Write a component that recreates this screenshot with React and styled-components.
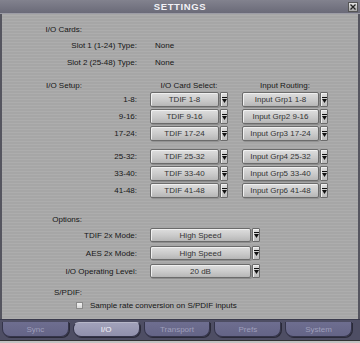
import styled, { createGlobalStyle } from "styled-components"

const GlobalStyle = createGlobalStyle`
    html, body {
        margin: 0;
        padding: 0;
        background: #bdbdbd;
    }
    body {
        font-family: "Liberation Sans", Arial, sans-serif;
        font-size: 8px;
        color: #161616;
    }
`

const Window = styled.div`
    width: 360px;
    height: 343px;
    display: flex;
    flex-direction: column;
    background: #bdbdbd;
    overflow: hidden;
`

const TitleBar = styled.div`
    height: 13px;
    display: grid;
    grid-template-columns: 1fr auto 1fr;
    align-items: center;
    background: linear-gradient(#82828e, #6a6a78);
    border-bottom: 1px solid #9c9ca6;
    padding: 0 2px 0 2px;
`

const Title = styled.div`
    grid-column: 2;
    color: #f2f2f6;
    font-weight: bold;
    font-size: 9.5px;
    letter-spacing: 0.6px;
`

const CloseButton = styled.div`
    grid-column: 3;
    justify-self: end;
    width: 8px;
    height: 8px;
    background: linear-gradient(#e4e4e4, #a8a8a8);
    border: 1px solid #555;
    display: flex;
    align-items: center;
    justify-content: center;
`

const Body = styled.div`
    flex: 1;
    padding-top: 11px;
    border-left: 2px solid #55555f;
    border-right: 2px solid #55555f;
    background-color: #a9a9a9;
    background-image: repeating-linear-gradient(
        0deg,
        rgba(255, 255, 255, 0.05) 0px,
        rgba(255, 255, 255, 0.05) 1px,
        rgba(0, 0, 0, 0.02) 1px,
        rgba(0, 0, 0, 0.02) 3px
    );
    display: flex;
    flex-direction: column;
`

const Header = styled.div`
    width: 80px;
    text-align: right;
    height: 10px;
    line-height: 10px;
    margin-top: ${p => p.$top || 0}px;
`

const HeaderRow = styled.div`
    display: grid;
    grid-template-columns: 80px 68px 78px 14px 86px;
    height: 10px;
    line-height: 10px;
    margin-top: ${p => p.$top || 0}px;
`

const ColHeader = styled.div`
    text-align: center;
    grid-column: ${p => p.$col};
`

const Row = styled.div`
    display: grid;
    grid-template-columns: 135px auto;
    column-gap: 13px;
    align-items: center;
    height: ${p => p.$h || 15}px;
    margin-top: ${p => p.$top || 0}px;
`

const Label = styled.div`
    text-align: right;
`

const Value = styled.div`
    padding-left: 5px;
`

const Controls = styled.div`
    display: flex;
    gap: 14px;
    height: 100%;
`

const Select = styled.div`
    display: flex;
    gap: 1px;
    width: ${p => p.$w}px;
    height: 100%;
`

const SelectBox = styled.div`
    flex: 1;
    box-sizing: border-box;
    border: 1px solid #6b6b6b;
    border-radius: 2px;
    background: linear-gradient(#dedede, #c8c8c8 60%, #b6b6b6);
    box-shadow: inset 1px 1px 0 #f0f0f0, 1px 1px 0 rgba(0, 0, 0, 0.15);
    color: #333;
    display: flex;
    align-items: center;
    justify-content: center;
    white-space: nowrap;
`

const ArrowBox = styled.div`
    width: 8px;
    box-sizing: border-box;
    border: 1px solid #6b6b6b;
    border-radius: 1px;
    background: linear-gradient(#dedede, #bcbcbc);
    box-shadow: inset 1px 1px 0 #f0f0f0;
    display: flex;
    align-items: center;
    justify-content: center;
`

const CheckRow = styled.div`
    display: flex;
    align-items: center;
    height: 10px;
    margin-top: 2px;
    padding-left: 74px;
    gap: 7px;
`

const CheckBox = styled.div`
    width: 7px;
    height: 7px;
    box-sizing: border-box;
    border: 1px solid #8a8a8a;
    background: linear-gradient(#f4f4f4, #d6d6d6);
`

const TabBar = styled.div`
    height: 20px;
    display: flex;
    gap: 4px;
    padding: 0 8px 0 2px;
    background: #4e4e64;
    border-top: 1px solid #3a3a4c;
`

const Tab = styled.div`
    flex: 1;
    height: 15px;
    margin-top: 2px;
    box-sizing: border-box;
    border-radius: ${p => (p.$active ? "6px 4px 8px 8px" : "0 0 8px 8px")};
    background: ${p => (p.$active ? "linear-gradient(#a2a2ba, #9090ac)" : "linear-gradient(#6e6e90, #646486)")};
    border: 1px solid #34344a;
    border-top: ${p => (p.$active ? "1px solid #b6b6c8" : "none")};
    box-shadow: 1px 1px 0 #2a2a38;
    color: ${p => (p.$active ? "#f4f4fa" : "#9e9eba")};
    display: flex;
    align-items: center;
    justify-content: center;
    font-size: 8px;
`

const Footer = styled.div`
    height: 2px;
    background: #c4c4c4;
    border-top: 1px solid #333;
`

function Arrow() {
    return (
        <svg width="5" height="6" viewBox="0 0 5 6">
            <rect x="0" y="0" width="5" height="1" fill="#111" />
            <path d="M0 2 L5 2 L2.5 6 Z" fill="#111" />
        </svg>
    )
}

function Dropdown({ value, width }) {
    return (
        <Select $w={width}>
            <SelectBox>{value}</SelectBox>
            <ArrowBox><Arrow /></ArrowBox>
        </Select>
    )
}

const setupRows = [
    { label: "1-8:", card: "TDIF 1-8", input: "Input Grp1 1-8", top: 1 },
    { label: "9-16:", card: "TDIF 9-16", input: "Input Grp2 9-16", top: 2 },
    { label: "17-24:", card: "TDIF 17-24", input: "Input Grp3 17-24", top: 2 },
    { label: "25-32:", card: "TDIF 25-32", input: "Input Grp4 25-32", top: 8 },
    { label: "33-40:", card: "TDIF 33-40", input: "Input Grp5 33-40", top: 2 },
    { label: "41-48:", card: "TDIF 41-48", input: "Input Grp6 41-48", top: 2 },
]

const options = [
    { label: "TDIF 2x Mode:", value: "High Speed", top: 3 },
    { label: "AES 2x Mode:", value: "High Speed", top: 4 },
    { label: "I/O Operating Level:", value: "20 dB", top: 4 },
]

const tabs = ["Sync", "I/O", "Transport", "Prefs", "System"]

export default function App() {
    return (
        <Window>
            <GlobalStyle />
            <TitleBar>
                <Title>SETTINGS</Title>
                <CloseButton>
                    <svg width="6" height="6" viewBox="0 0 6 6">
                        <path d="M0.5 0.5 L5.5 5.5 M5.5 0.5 L0.5 5.5" stroke="#222" strokeWidth="1.3" />
                    </svg>
                </CloseButton>
            </TitleBar>
            <Body>
                <Header>I/O Cards:</Header>
                <Row $h={17} $top={2}>
                    <Label>Slot 1 (1-24) Type:</Label>
                    <Value>None</Value>
                </Row>
                <Row $h={17}>
                    <Label>Slot 2 (25-48) Type:</Label>
                    <Value>None</Value>
                </Row>

                <HeaderRow $top={10}>
                    <Header>I/O Setup:</Header>
                    <ColHeader $col={3}>I/O Card Select:</ColHeader>
                    <ColHeader $col={5}>Input Routing:</ColHeader>
                </HeaderRow>
                {setupRows.map(r => (
                    <Row key={r.label} $top={r.top}>
                        <Label>{r.label}</Label>
                        <Controls>
                            <Dropdown value={r.card} width={78} />
                            <Dropdown value={r.input} width={86} />
                        </Controls>
                    </Row>
                ))}

                <Header $top={17}>Options:</Header>
                {options.map(o => (
                    <Row key={o.label} $h={14} $top={o.top}>
                        <Label>{o.label}</Label>
                        <Controls>
                            <Dropdown value={o.value} width={110} />
                        </Controls>
                    </Row>
                ))}

                <Header $top={10}>S/PDIF:</Header>
                <CheckRow>
                    <CheckBox />
                    <span>Sample rate conversion on S/PDIF inputs</span>
                </CheckRow>
            </Body>
            <TabBar>
                {tabs.map(t => (
                    <Tab key={t} $active={t === "I/O"}>{t}</Tab>
                ))}
            </TabBar>
            <Footer />
        </Window>
    )
}
